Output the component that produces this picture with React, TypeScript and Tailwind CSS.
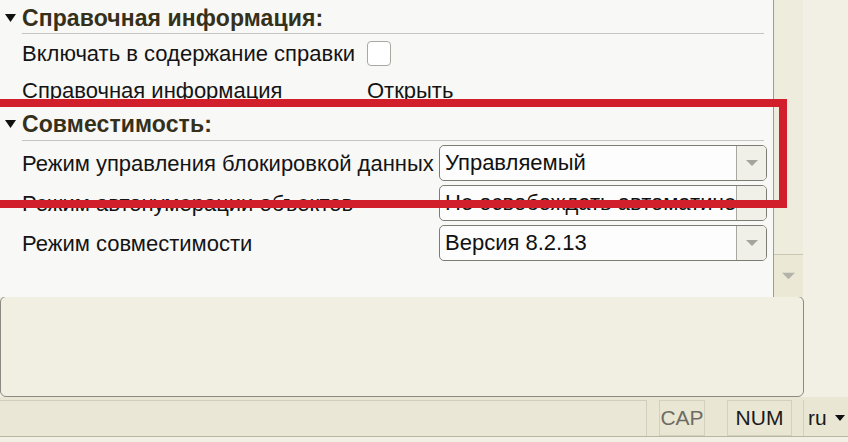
const COMBOS = [
  { label: "Режим управления блокировкой данных", value: "Управляемый" },
  { label: "Режим автонумерации объектов", value: "Не освобождать автоматически" },
  { label: "Режим совместимости", value: "Версия 8.2.13" },
];

function Arrow({ className }: { className: string }) {
  return (
    <svg width="14" height="8" viewBox="0 0 14 8" className={className}>
      <path d="M0 0 H14 L7 7 Z" fill="currentColor" />
    </svg>
  );
}

function GroupHeader({ title, h, pb }: { title: string; h: string; pb: string }) {
  return (
    <div className={`flex ${h}`}>
      <div className={`w-[22px] flex items-end pl-[5px] ${pb}`}>
        <svg width="11" height="8" viewBox="0 0 11 8" className="mb-[11px]">
          <path d="M0 0 H11 L5.5 8 Z" fill="#111" />
        </svg>
      </div>
      <div className={`flex-1 mr-[9px] border-b border-[#c4c4c0] flex items-end ${pb}`}>
        <span className="text-[23px] leading-[28px] font-bold text-[#35301a] tracking-[0.1px]">{title}</span>
      </div>
    </div>
  );
}

function Combo({ value }: { value: string }) {
  return (
    <div className="h-[36px] w-[328px] flex border border-[#7d7d74] rounded-[5px] bg-[#fdfdfd] overflow-hidden">
      <div className="flex-1 overflow-hidden whitespace-nowrap pl-[5px] text-[22px] leading-[34px] text-[#111]">
        {value}
      </div>
      <div className="w-[30px] border-l border-[#a8a8a0] bg-[#f0efe8] flex items-center justify-center">
        <Arrow className="text-[#a6a59b] w-[12px] h-[7px]" />
      </div>
    </div>
  );
}

export default function App() {
  return (
    <div className="w-[848px] h-[442px] relative overflow-hidden bg-[#f2f0e4] font-['Liberation_Sans',Arial,sans-serif]">
      <div className="flex h-[297px]">
        {/* form content */}
        <div className="w-[774px] bg-[#f8f8f7] border-r border-[#9c9c94]">
          <GroupHeader title="Справочная информация:" h="h-[34px]" pb="pb-[1px]" />
          <div className="grid grid-cols-[345px_1fr] pl-[22px] text-[22px] text-[#141414]">
            <div className="h-[38px] flex items-center">Включать в содержание справки</div>
            <div className="h-[38px] flex items-center">
              <div className="w-[24px] h-[25px] rounded-[4px] border border-[#a9a9a2] bg-white" />
            </div>
            <div className="h-[37px] flex items-center">Справочная информация</div>
            <div className="h-[37px] flex items-center">Открыть</div>
          </div>
          <GroupHeader title="Совместимость:" h="h-[32px]" pb="pb-[2px]" />
          <div className="pt-[2px]">
            {COMBOS.map((c) => (
              <div key={c.label} className="h-[40px] flex items-center pl-[22px]">
                <div className="w-[417px] text-[22px] text-[#141414] whitespace-nowrap">{c.label}</div>
                <Combo value={c.value} />
              </div>
            ))}
          </div>
        </div>
        {/* scrollbar */}
        <div className="w-[29px] flex flex-col bg-[#ebe8d6]">
          <div className="flex-1 bg-[#eeecdd] border-b border-[#c9c6b2]" />
          <div className="h-[42px] flex items-center justify-center">
            <Arrow className="text-[#b4b3aa] w-[13px] h-[9px]" />
          </div>
        </div>
        <div className="flex-1" />
      </div>

      {/* message panel */}
      <div className="w-[804px] h-[101px] bg-[#f1efe2] border border-[#8a8a82] rounded-[6px] -mt-px" />

      {/* status bar */}
      <div className="h-[40px] flex items-stretch pt-[3px] bg-[#e9e6d4] border-b border-[#b8b5a2] text-[21px]">
        <div className="w-[647px] border-t border-r border-[#d2cebb] bg-[#eae7d6]" />
        <div className="ml-[12px] w-[46px] border border-[#d4d0bc] flex items-center justify-center text-[#6e6c62]">
          CAP
        </div>
        <div className="ml-[22px] w-[65px] border border-[#d4d0bc] flex items-center justify-center text-[#1a1a1a]">
          NUM
        </div>
        <div className="ml-[11px] flex-1 border-l border-[#d4d0bc] flex items-center pl-[4px] gap-[8px] text-[#1a1a1a]">
          <span>ru</span>
          <svg width="10" height="6" viewBox="0 0 10 6">
            <path d="M0 0 H10 L5 6 Z" fill="#111" />
          </svg>
        </div>
      </div>

      {/* red annotation frame */}
      <div className="absolute left-[-12px] top-[99px] w-[799px] h-[109px] border-[8px] border-[#d21f2c]" />
    </div>
  );
}
